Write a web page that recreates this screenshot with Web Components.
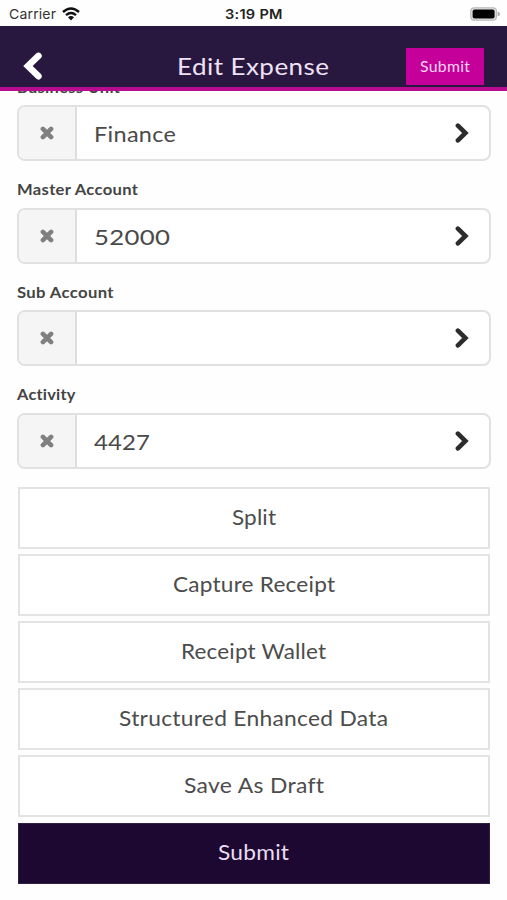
<!DOCTYPE html>
<html lang="en">
<head>
<meta charset="utf-8">
<title>Edit Expense</title>
<style>
html,body{margin:0;height:900px;overflow:hidden;background:#fefefe}
</style>
</head>
<body>
<expense-page></expense-page>
<script>
const define = (name, html, setup) => customElements.define(name, class extends HTMLElement {
  connectedCallback() {
    if (this.shadowRoot) return;
    this.attachShadow({ mode: 'open' }).innerHTML = html;
    if (setup) setup(this, this.shadowRoot);
  }
});

/* Text set to a given width: spacing takes part of the difference, stretch the rest. */
define('wide-text', `<style>
:host{display:inline-block;white-space:pre;text-align:left}
span{display:inline-block;transform-origin:0 50%}
</style><span></span>`, (el, root) => {
  const span = root.querySelector('span');
  span.textContent = el.getAttribute('text');
  const target = +el.getAttribute('width');
  const share = el.hasAttribute('stretch') ? 0.1 : 0.3;
  const natural = span.getBoundingClientRect().width;
  const n = span.textContent.length;
  const ls = (target - natural) * share / n;
  span.style.letterSpacing = ls + 'px';
  const now = span.getBoundingClientRect().width - ls;
  span.style.transform = 'scaleX(' + target / now + ')';
  el.style.width = target + 'px';
});

define('status-bar', `<style>
:host{display:grid;grid-template-columns:1fr auto 1fr;align-items:center;height:25.5px;padding:2px 7px 0 9px;box-sizing:border-box;background:#fefefe;color:#333;font-family:Inter,"Liberation Sans",sans-serif;font-size:13.3px}
.left{display:flex;align-items:center;gap:6px}
.time{font-weight:600;font-size:13.5px;color:#222;margin-right:2px}
.batt{justify-self:end;display:block}
svg{display:block}
</style>
<div class="left"><wide-text text="Carrier" width="47"></wide-text>
<svg width="18" height="14" viewBox="0 0 18 14" fill="none" stroke="#111" stroke-width="2.4"><path d="M1 5Q9-2.2 17 5M4 8.2Q9 3.9 14 8.2"/><path d="M6 10.3Q9 7.7 12 10.3L9 13.5Z" fill="#111" stroke="none"/></svg></div>
<wide-text class="time" text="3:19 PM" width="57.5"></wide-text>
<svg class="batt" width="30" height="14" viewBox="0 0 30 14"><rect x=".8" y=".8" width="25.6" height="12.4" rx="3.4" fill="#e4e4e4" stroke="#bbb" stroke-width="1.2"/><rect x="2.6" y="2.4" width="22" height="9.2" rx="2" fill="#000"/><path d="M27.6 4.6Q30 5.4 30 7T27.6 9.4Z" fill="#aaa"/></svg>`);

define('nav-bar', `<style>
:host{display:grid;grid-template-columns:1fr auto 1fr;height:65.5px;box-sizing:border-box;border-bottom:4px solid #b90b90;background:#28173f;color:#eee2f4;padding:20px 23px 0;align-items:center;font-family:Lato,sans-serif}
.title{font-size:24px;line-height:38px;margin-right:1px}
.submit{justify-self:end;display:grid;place-items:center;width:78px;height:37px;background:#c5009a;color:#fbd4f2;font-size:14.5px}
svg{display:block}
</style>
<svg width="20" height="30" viewBox="0 0 20 30" fill="none" stroke="#fff" stroke-width="6.6" stroke-linecap="round"><path d="M15.4 4.9L5 15L15.4 25.2" stroke-linejoin="miter"/></svg>
<wide-text class="title" text="Edit Expense" width="152"></wide-text>
<div class="submit"><wide-text text="Submit" width="50"></wide-text></div>`);

define('account-field', `<style>
:host{display:block;font-family:Lato,sans-serif;color:#333}
.label{height:20px;line-height:19px;margin-bottom:7.5px;font-size:15.2px;font-weight:700;color:#444}
.box{display:flex;height:56px;box-sizing:border-box;border:2px solid #e1e1e1;border-radius:8px;overflow:hidden;background:#fff}
.clear{width:56px;border-right:2px solid #dedede;background:#f5f5f5;display:grid;place-items:center}
.value{flex:1;display:flex;align-items:center;padding:1px 0 0 16.5px;font-size:22px;color:#4a4a4a}
.arrow{align-self:center;margin-right:20px}
svg{display:block}
</style>
<div class="label"></div>
<div class="box"><div class="clear"><svg width="14" height="14" viewBox="0 0 14 14" stroke="#808080" stroke-width="4.6" stroke-linecap="round"><path d="M2.9 2.9L11.1 11.1M11.1 2.9L2.9 11.1"/></svg></div>
<div class="value"></div>
<svg class="arrow" width="14" height="20" viewBox="0 0 14 20" fill="none" stroke="#2c2c2c" stroke-width="4.6" stroke-linecap="round"><path d="M2.9 2.7L10.4 10L2.9 17.3"/></svg></div>`, (el, root) => {
  const add = (sel, text, width, stretch) => {
    const t = document.createElement('wide-text');
    t.setAttribute('text', text); t.setAttribute('width', width);
    if (stretch) t.setAttribute('stretch', '');
    root.querySelector(sel).append(t);
  };
  add('.label', el.getAttribute('label'), el.getAttribute('label-width'));
  const v = el.getAttribute('value');
  if (v) add('.value', v, el.getAttribute('value-width'), /^\d/.test(v));
});

define('action-button', `<style>
:host{display:grid;place-items:center;height:61.5px;box-sizing:border-box;border:2px solid #e3e3e4;background:#fff;color:#4c4c4c;font-family:Lato,sans-serif;font-size:21.5px;padding-bottom:2px}
:host([primary]){background:#1c0830;border:1px solid #302044;color:#eadcf2}
</style><slot></slot>`);

define('expense-page', `<style>
:host{display:flex;flex-direction:column;width:507px;height:900px;background:#fefefe}
main{flex:1;overflow:hidden;padding:0 16px 0 17px}
.fields{display:grid;gap:19.1px;margin-top:-13.4px}
.actions{display:grid;gap:5.6px;margin:18.2px 1px 0 .8px}
</style>
<status-bar></status-bar>
<nav-bar></nav-bar>
<main>
<div class="fields">
<account-field label="Business Unit" label-width="103" value="Finance" value-width="82"></account-field>
<account-field label="Master Account" label-width="121" value="52000" value-width="76"></account-field>
<account-field label="Sub Account" label-width="96.5"></account-field>
<account-field label="Activity" label-width="58.5" value="4427" value-width="56"></account-field>
</div>
<div class="actions">
<action-button><wide-text text="Split" width="44"></wide-text></action-button>
<action-button><wide-text text="Capture Receipt" width="162"></wide-text></action-button>
<action-button><wide-text text="Receipt Wallet" width="145"></wide-text></action-button>
<action-button><wide-text text="Structured Enhanced Data" width="269"></wide-text></action-button>
<action-button><wide-text text="Save As Draft" width="140"></wide-text></action-button>
<action-button primary><wide-text text="Submit" width="71"></wide-text></action-button>
</div>
</main>`);
</script>
</body>
</html>
